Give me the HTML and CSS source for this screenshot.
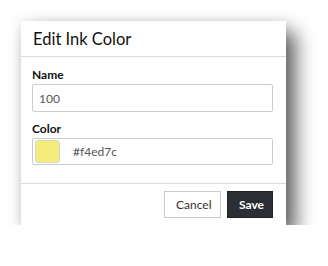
FILE: index.html
```html
<!DOCTYPE html>
<html>
<head>
<meta charset="utf-8">
<link rel="stylesheet" href="styles.css">
</head>
<body>
<div class="dialog">
  <div class="dialog-header">Edit Ink Color</div>
  <div class="dialog-body">
    <div class="field">
      <label class="label">Name</label>
      <div class="input">100</div>
    </div>
    <div class="field">
      <label class="label">Color</label>
      <div class="input color-input">
        <span class="swatch" style="background:#f4ed7c"></span>
        <span class="hex">#f4ed7c</span>
      </div>
    </div>
  </div>
  <div class="dialog-footer">
    <button class="btn btn-default">Cancel</button>
    <button class="btn btn-primary">Save</button>
  </div>
</div>
</body>
</html>
```
FILE: styles.css
```css
html, body {
  margin: 0;
  padding: 0;
  background: #ffffff;
}
body {
  padding: 21px 0 0 21px;
  font-family: Lato, "Open Sans", sans-serif;
  color: #222;
}
.dialog {
  width: 265px;
  background: #fff;
  box-shadow: 10px 11px 18px rgba(0,0,0,0.6), 0 0 12px rgba(0,0,0,0.1);
}
.dialog-header {
  height: 36px;
  box-sizing: border-box;
  padding: 0 12px;
  display: flex;
  align-items: center;
  font-size: 16.5px;
  color: #111;
  border-bottom: 1px solid #dcdcdc;
}
.dialog-body {
  padding: 10px 13px 18px 11px;
  display: flex;
  flex-direction: column;
  gap: 9px;
}
.field {
  display: flex;
  flex-direction: column;
  gap: 2px;
}
.label {
  font-size: 12px;
  font-weight: 700;
  color: #111;
  line-height: 15px;
}
.input {
  height: 28px;
  box-sizing: border-box;
  border: 1px solid #cccccc;
  border-radius: 2px;
  padding: 0 6px;
  display: flex;
  align-items: center;
  font-size: 12px;
  color: #555;
}
.color-input {
  height: 27px;
  padding: 0 2px;
  gap: 13px;
}
.swatch {
  width: 25px;
  height: 23px;
  border-radius: 3px;
  box-sizing: border-box;
  border: 1px solid #d8d8c8;
}
.dialog-footer {
  border-top: 1px solid #dcdcdc;
  padding: 7px 13px 7px 12px;
  display: flex;
  justify-content: flex-end;
  gap: 6px;
}
.btn {
  height: 27px;
  box-sizing: border-box;
  font-family: Lato, "Open Sans", sans-serif;
  font-size: 12px;
  padding: 0 11px;
  border-radius: 0;
  cursor: pointer;
}
.btn-default {
  width: 57px;
  background: #fff;
  border: 1px solid #cccccc;
  color: #333;
}
.btn-primary {
  width: 46px;
  background: #2b2f33;
  border: 1px solid #1e2124;
  color: #fff;
  font-weight: 700;
}
```
